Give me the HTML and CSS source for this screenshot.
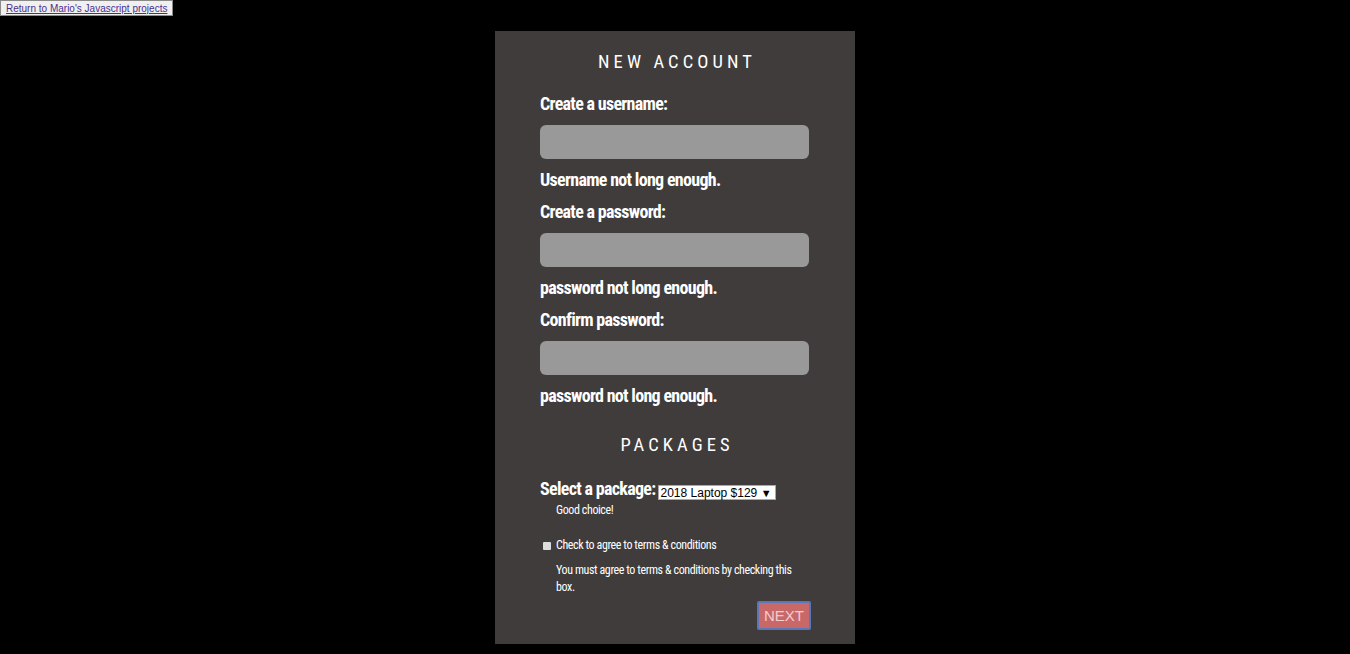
FILE: index.html
```html
<!DOCTYPE html>
<html>
<head>
<meta charset="utf-8">
<link rel="stylesheet" href="styles.css">
</head>
<body>
<button class="return"><a href="#">Return to Mario's Javascript projects</a></button>
<main class="card">
  <h1 class="heading">NEW ACCOUNT</h1>
  <div class="field">
    <label class="label">Create a username:</label>
    <div class="input"></div>
    <p class="error">Username not long enough.</p>
  </div>
  <div class="field">
    <label class="label">Create a password:</label>
    <div class="input"></div>
    <p class="error">password not long enough.</p>
  </div>
  <div class="field">
    <label class="label">Confirm password:</label>
    <div class="input"></div>
    <p class="error">password not long enough.</p>
  </div>
  <h2 class="heading heading-pk">PACKAGES</h2>
  <div class="pkg">
    <span class="label">Select a package:</span>
    <span class="select">2018 Laptop $129 <span class="arrow">&#9660;</span></span>
  </div>
  <p class="small good">Good choice!</p>
  <div class="terms">
    <span class="check"></span>
    <span class="small">Check to agree to terms &amp; conditions</span>
  </div>
  <p class="small warn">You must agree to terms &amp; conditions by checking this box.</p>
  <div class="actions"><button class="next">NEXT</button></div>
</main>
</body>
</html>
```
FILE: styles.css
```css
html, body { margin: 0; padding: 0; background: #000; }
body {
  height: 654px; overflow: hidden;
  font-family: "Roboto Condensed", "DejaVu Sans Condensed", "DejaVu Sans", sans-serif;
  font-stretch: condensed; color: #fff;
}
.return {
  display: block; margin: 0; padding: 0 0 0 5px; height: 16px; width: 173px;
  background: #f0f0f0; border: 1px solid #8a8a8a; border-radius: 0;
  font-family: "Liberation Sans", Arial, sans-serif; font-size: 10px; line-height: 13px;
  text-align: left; box-sizing: border-box; white-space: nowrap; overflow: hidden;
}
.return a { color: #4a2f8e; text-decoration: underline; }
.card {
  width: 360px; margin: 15px auto 0; box-sizing: border-box; background: #403c3c;
  padding: 19px 45px 0; height: 613px;
}
.heading {
  margin: 0; text-align: center; font-size: 18.5px; font-weight: 400; letter-spacing: 4.1px;
  line-height: 24px; padding-left: 4.1px;
}
.field { margin-top: 17px; }
.field + .field { margin-top: 7px; }
.label { display: block; font-size: 18px; font-weight: 700; line-height: 26px; letter-spacing: -0.7px; white-space: nowrap; }
.input { height: 34px; background: #999; border-radius: 6px; margin-top: 8px; width: 269px; }
.error { margin: 9px 0 0; font-size: 18px; font-weight: 700; line-height: 24px; letter-spacing: -0.7px; white-space: nowrap; }
.heading-pk { margin-top: 25px; }
.pkg { display: flex; align-items: flex-start; margin-top: 19px; }
.pkg .label { display: inline; }
.select {
  margin-left: 2px; margin-top: 9px; display: inline-flex; align-items: center; height: 15px; width: 118px; box-sizing: border-box;
  background: #fff; color: #000; border: 1px solid #a9a9a9; font-family: "Liberation Sans", Arial, sans-serif;
  font-stretch: normal; font-size: 12px; padding: 0 3px 0 2px; justify-content: space-between; white-space: nowrap;
}
.arrow { font-size: 11px; }
.small { margin: 0; font-size: 12px; line-height: 17px; letter-spacing: -0.4px; }
.small.good { margin: 0 0 0 16px; }
.terms { display: flex; align-items: center; margin-top: 18px; margin-left: 3px; }
.check { width: 8px; height: 8px; background: #ddd; border-radius: 1px; margin-right: 5px; flex: none; }
.small.warn { margin: 8px 0 0 16px; width: 242px; }
.actions { display: flex; justify-content: flex-end; margin-right: -1px; margin-top: 5px; }
.next {
  width: 54px; height: 29px; background: #c96868; color: #f4cccc; border: 2px solid #5b76b8;
  font-family: "Liberation Sans", Arial, sans-serif; font-size: 15px; padding: 0; border-radius: 2px;
}
```
